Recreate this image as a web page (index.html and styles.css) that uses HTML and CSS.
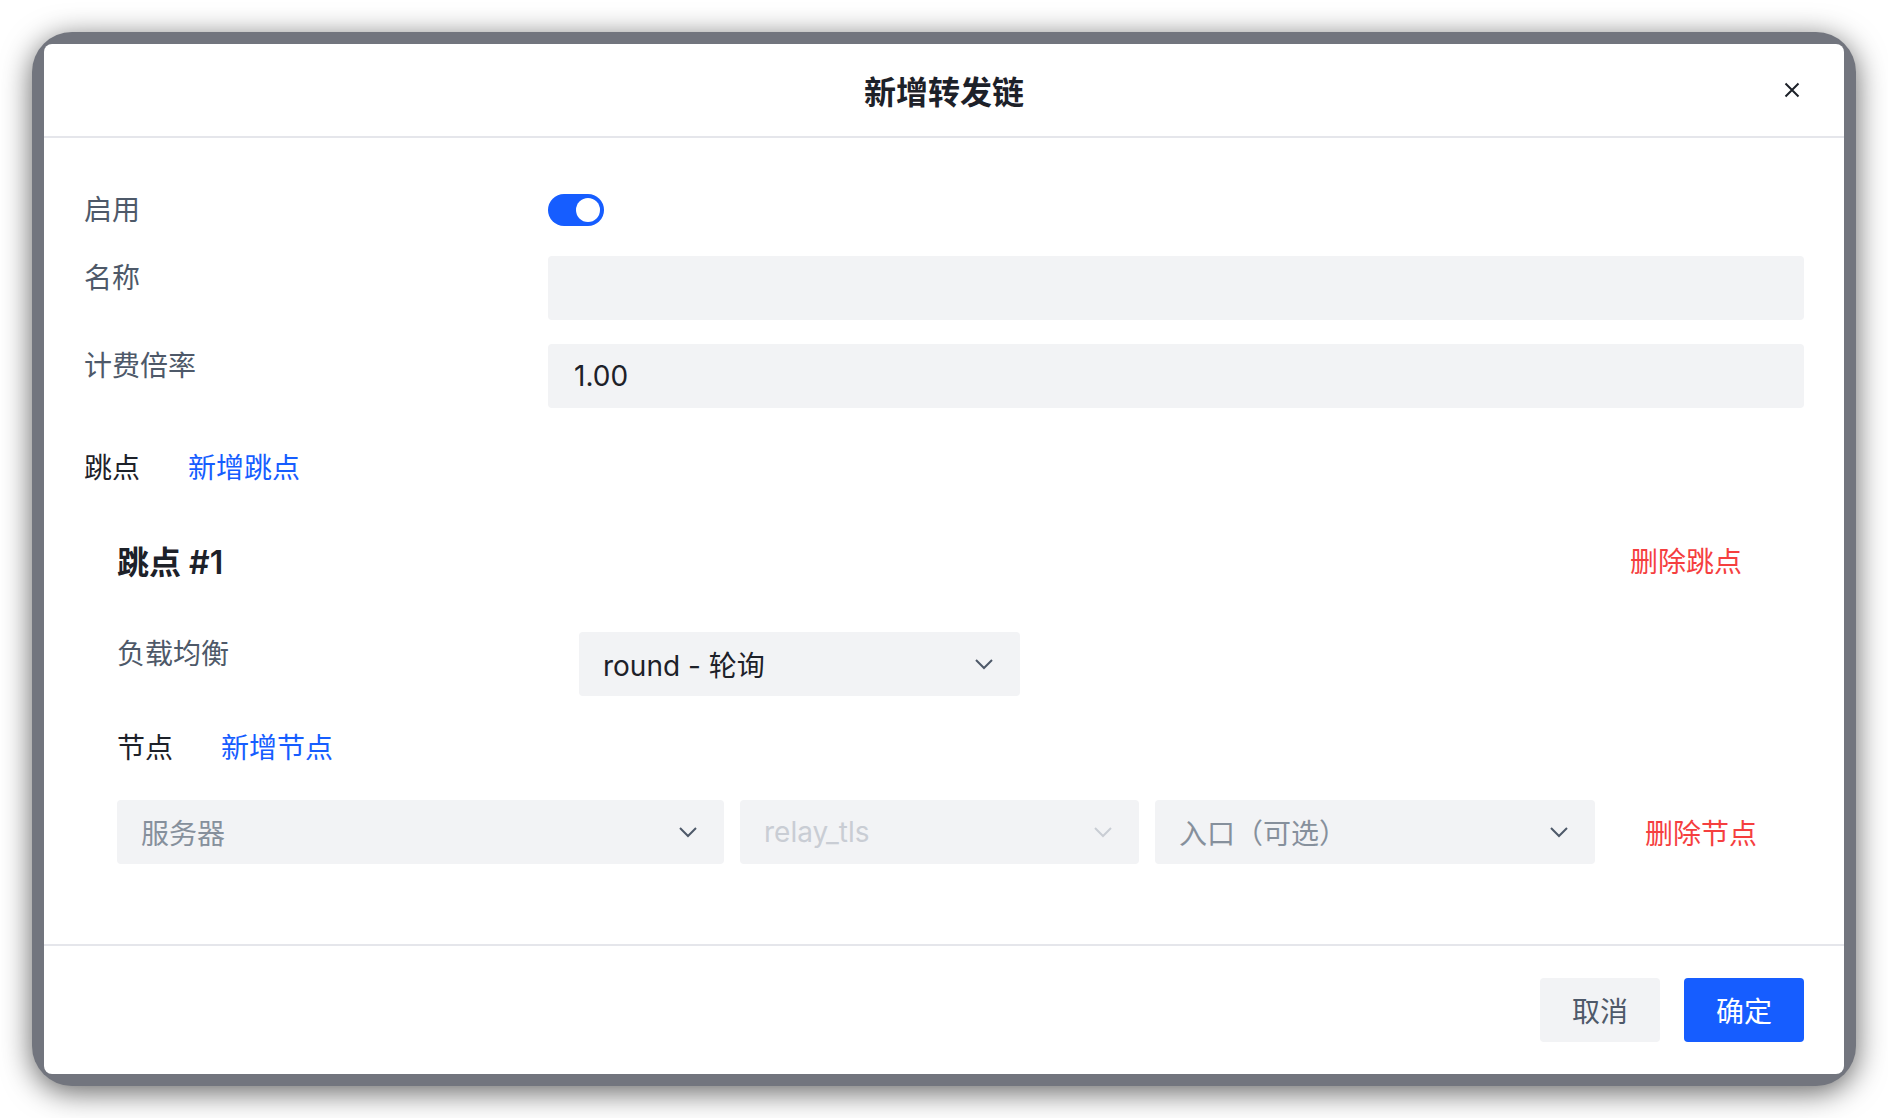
FILE: index.html
```html
<!DOCTYPE html>
<html lang="zh-CN">
<head>
    <meta charset="UTF-8">
    <meta name="viewport" content="width=device-width, initial-scale=1.0">
    <title>新增转发链</title>
    <link rel="stylesheet" href="styles.css">
</head>
<body>
    <div class="frame">
        <div class="modal">
            <div class="modal-header">
                <span></span>
                <span class="modal-title">新增转发链</span>
                <button class="modal-close" aria-label="关闭">
                    <svg width="16" height="16" viewBox="0 0 16 16"><path d="M1.5 1.5 L14.5 14.5 M14.5 1.5 L1.5 14.5" stroke="#1d2129" stroke-width="2" fill="none"/></svg>
                </button>
            </div>

            <div class="modal-body">
                <div class="form-row row-switch">
                    <label class="form-label">启用</label>
                    <div class="form-control">
                        <span class="switch"><span class="switch-dot"></span></span>
                    </div>
                </div>

                <div class="form-row">
                    <label class="form-label">名称</label>
                    <div class="form-control">
                        <div class="input"></div>
                    </div>
                </div>

                <div class="form-row">
                    <label class="form-label">计费倍率</label>
                    <div class="form-control">
                        <div class="input">1.00</div>
                    </div>
                </div>

                <div class="section-head">
                    <span class="section-label">跳点</span>
                    <a class="link">新增跳点</a>
                </div>

                <div class="hop">
                    <div class="hop-head">
                        <span class="hop-title">跳点 #1</span>
                        <a class="link link-danger">删除跳点</a>
                    </div>

                    <div class="form-row hop-row">
                        <label class="form-label">负载均衡</label>
                        <div class="form-control">
                            <div class="select select-lb">
                                <span class="select-value">round - 轮询</span>
                                <svg class="chevron" width="20" height="12" viewBox="0 0 20 12"><path d="M2 2 L10 10 L18 2" stroke="currentColor" stroke-width="2" fill="none"/></svg>
                            </div>
                        </div>
                    </div>

                    <div class="section-head node-head">
                        <span class="section-label">节点</span>
                        <a class="link">新增节点</a>
                    </div>

                    <div class="node-row">
                        <div class="select">
                            <span class="select-placeholder">服务器</span>
                            <svg class="chevron" width="20" height="12" viewBox="0 0 20 12"><path d="M2 2 L10 10 L18 2" stroke="currentColor" stroke-width="2" fill="none"/></svg>
                        </div>
                        <div class="select select-disabled">
                            <span class="select-placeholder">relay_tls</span>
                            <svg class="chevron" width="20" height="12" viewBox="0 0 20 12"><path d="M2 2 L10 10 L18 2" stroke="currentColor" stroke-width="2" fill="none"/></svg>
                        </div>
                        <div class="select">
                            <span class="select-placeholder">入口（可选）</span>
                            <svg class="chevron" width="20" height="12" viewBox="0 0 20 12"><path d="M2 2 L10 10 L18 2" stroke="currentColor" stroke-width="2" fill="none"/></svg>
                        </div>
                        <a class="link link-danger node-delete">删除节点</a>
                    </div>
                </div>
            </div>

            <div class="modal-footer">
                <button class="btn btn-secondary">取消</button>
                <button class="btn btn-primary">确定</button>
            </div>
        </div>
    </div>
</body>
</html>
```

FILE: styles.css
```css
body {
    margin: 0;
    padding: 32px;
    background-color: #ffffff;
    font-family: Inter, "Noto Sans CJK SC", sans-serif;
    color: #1d2129;
}
.frame {
    background-color: #72757e;
    border-radius: 40px;
    padding: 12px;
    box-shadow: 0 6px 30px rgba(0,0,0,0.62);
}
.modal {
    background-color: #ffffff;
    border-radius: 8px;
}
.modal-header {
    height: 94px;
    box-sizing: border-box;
    border-bottom: 2px solid #e5e6eb;
    padding: 0 40px;
    display: grid;
    grid-template-columns: 1fr auto 1fr;
    align-items: center;
}
.modal-title {
    font-size: 32px;
    font-weight: 600;
    color: #1d2129;
}
.modal-close {
    justify-self: end;
    margin-right: 4px;
    border: none;
    background: none;
    padding: 0;
    display: flex;
}
.modal-body {
    padding: 50px 40px 48px;
}
.form-row {
    display: grid;
    grid-template-columns: 464px 1fr;
    align-items: start;
}
.form-row + .form-row {
    margin-top: 24px;
}
.form-label {
    font-size: 28px;
    line-height: 44px;
    color: #4e5969;
}
.row-switch .form-control {
    height: 44px;
    display: flex;
    align-items: center;
}
.switch {
    position: relative;
    display: inline-block;
    width: 56px;
    height: 32px;
    border-radius: 16px;
    background-color: #165dff;
}
.switch-dot {
    position: absolute;
    top: 4px;
    right: 4px;
    width: 24px;
    height: 24px;
    border-radius: 50%;
    background-color: #ffffff;
}
.input {
    height: 64px;
    box-sizing: border-box;
    background-color: #f2f3f5;
    border-radius: 4px;
    padding: 0 24px 0 26px;
    font-size: 28px;
    line-height: 64px;
    color: #1d2129;
}
.section-head {
    margin-top: 38px;
    display: flex;
    gap: 48px;
    font-size: 28px;
    line-height: 44px;
}
.section-label {
    color: #1d2129;
}
.link {
    color: #165dff;
    white-space: nowrap;
    cursor: pointer;
}
.link-danger {
    color: #f53f3f;
    padding: 0 30px;
}
.hop {
    margin-top: 16px;
    padding: 32px 32px 32px 33px;
}
.hop-head {
    display: flex;
    justify-content: space-between;
    align-items: center;
    height: 44px;
    font-size: 28px;
}
.hop-title {
    font-size: 32px;
    font-weight: 600;
    color: #1d2129;
}
.hop-row {
    margin-top: 50px;
    grid-template-columns: 462px 1fr;
}
.select {
    height: 64px;
    box-sizing: border-box;
    background-color: #f2f3f5;
    border-radius: 4px;
    padding: 0 26px 0 24px;
    display: flex;
    align-items: center;
    justify-content: space-between;
    font-size: 28px;
    color: #4e5969;
}
.select-lb {
    width: 441px;
}
.select-value {
    color: #1d2129;
}
.select-placeholder {
    color: #86909c;
}
.select-disabled,
.select-disabled .select-placeholder {
    color: #c9cdd4;
}
.node-head {
    margin-top: 30px;
}
.node-row {
    margin-top: 30px;
    display: grid;
    grid-template-columns: 607px 399px 440px auto;
    column-gap: 16px;
    align-items: center;
}
.node-delete {
    margin-left: 4px;
    font-size: 28px;
}
.modal-footer {
    border-top: 2px solid #e5e6eb;
    padding: 32px 40px;
    display: flex;
    justify-content: flex-end;
    gap: 24px;
}
.btn {
    height: 64px;
    padding: 0 30px;
    border: 2px solid transparent;
    border-radius: 4px;
    font-family: Inter, "Noto Sans CJK SC", sans-serif;
    font-size: 28px;
    cursor: pointer;
}
.btn-secondary {
    background-color: #f2f3f5;
    color: #4e5969;
}
.btn-primary {
    background-color: #165dff;
    color: #ffffff;
}
```
